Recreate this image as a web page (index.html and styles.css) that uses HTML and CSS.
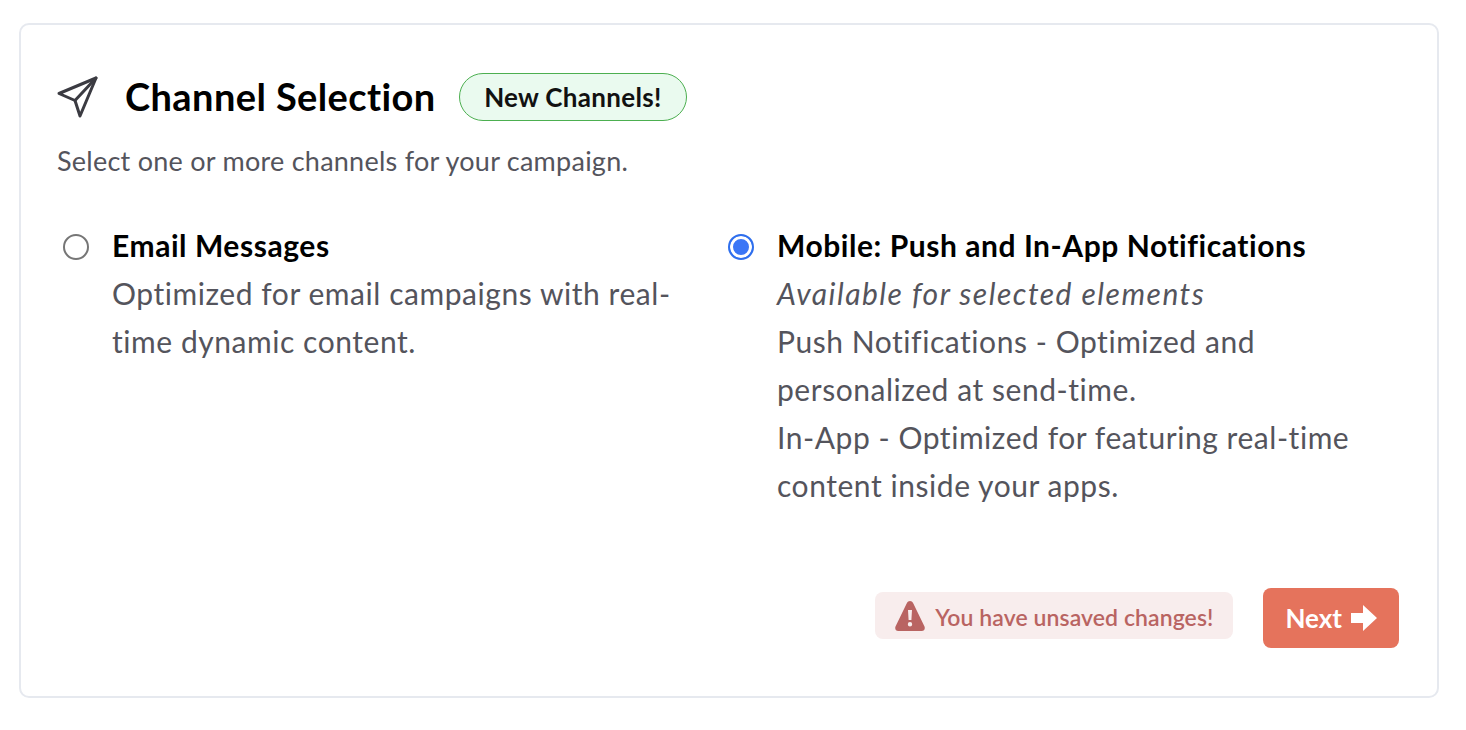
FILE: index.html
```html
<!DOCTYPE html><html lang="en">
<head>
    <meta charset="UTF-8">
    <title>Channel Selection</title>
    <link rel="stylesheet" href="styles.css">
</head>
<body>
<div class="card">
    <div class="header">
        <svg class="plane" width="44" height="44" viewBox="0 0 44 44" fill="none" stroke="#3b3b42" stroke-width="3" stroke-linejoin="round" stroke-linecap="round">
            <path d="M39 3 2 18.500 18 25.500 23 41Z"/>
            <path d="M39 3 18 25.500"/>
        </svg>
        <h2>Channel Selection</h2>
        <span class="badge">New Channels!</span>
    </div>
    <p class="intro">Select one or more channels for your campaign.</p>

    <div class="channels">
        <div class="channel">
            <span class="radio"></span>
            <div class="channel-text">
                <h3>Email Messages</h3>
                <p>Optimized for email campaigns with real-time dynamic content.</p>
            </div>
        </div>
        <div class="channel">
            <span class="radio checked"></span>
            <div class="channel-text">
                <h3>Mobile: Push and In-App Notifications</h3>
                <p><em>Available for selected elements</em></p>
                <p>Push Notifications - Optimized and personalized at send-time.</p>
                <p>In-App - Optimized for featuring real-time content inside your apps.</p>
            </div>
        </div>
    </div>

    <div class="footer">
        <div class="warning">
            <svg width="30" height="30" viewBox="0 0 30 30"><path fill="#b96462" fill-rule="evenodd" d="M11.800 2.200c1.400-2.900 5-2.900 6.400 0l11.300 23.400c.9 2-.4 4.400-2.800 4.400H3.300C.9 30-.4 27.600.5 25.600ZM13 9l.6 10h2.800L17 9ZM15 21a2.200 2.200 0 1 0 0 4.400 2.200 2.200 0 0 0 0-4.400Z"/></svg>
            <span>You have unsaved changes!</span>
        </div>
        <button class="next-btn">Next
            <svg width="26" height="26" viewBox="0 0 26 26"><path fill="#fff" d="M0 8h12V0l14 13-14 13v-8H0Z"/></svg>
        </button>
    </div>
</div>
</body>
</html>
```
FILE: styles.css
```css
* {
    margin: 0;
    padding: 0;
    box-sizing: border-box;
    font-family: Lato, "Open Sans", sans-serif;
}
body {
    padding: 23px 27px 0 19px;
    background: #fff;
}
.card {
    height: 675px;
    border: 2px solid #e6e9ef;
    border-radius: 10px;
    padding: 48px 38px 0 36px;
}
.header {
    display: flex;
    align-items: center;
    height: 48px;
}
.plane { flex: none; margin-right: -2px; }
h2 {
    margin-left: 26px;
    margin-top: -2px;
    font-size: 38px;
    font-weight: 700;
    color: #000;
    letter-spacing: 0.4px;
}
.badge {
    margin-left: 23px;
    height: 48px;
    line-height: 46px;
    padding: 0 24.5px;
    border: 1px solid #4caf50;
    border-radius: 24px;
    background: #eafaef;
    color: #111;
    font-size: 26px;
    font-weight: 700;
    letter-spacing: 0.3px;
}
.intro {
    margin-top: 20px;
    line-height: 40px;
    font-size: 27px;
    letter-spacing: 0.25px;
    color: #54545c;
}
.channels {
    display: grid;
    grid-template-columns: 665px 1fr;
    margin-top: 40px;
    height: 367px;
}
.channel {
    display: flex;
    padding-left: 6px;
}
.radio {
    flex: none;
    width: 26px;
    height: 26px;
    margin-top: 13px;
    border: 2px solid #767676;
    border-radius: 50%;
}
.radio.checked {
    border-color: #2f6fed;
    background: #3b76f6;
    box-shadow: inset 0 0 0 3px #fff;
}
.channel-text {
    margin-left: 23px;
    width: 580px;
    font-size: 30px;
    letter-spacing: 0.55px;
    line-height: 48px;
    color: #54545c;
}
.channel-text em {
    letter-spacing: 1.5px;
}
h3 {
    font-size: 30px;
    font-weight: 700;
    letter-spacing: 0.55px;
    color: #000;
}
.footer {
    display: flex;
    justify-content: flex-end;
    align-items: center;
    gap: 30px;
}
.warning {
    display: flex;
    align-items: center;
    gap: 10px;
    height: 47px;
    margin-bottom: 5px;
    padding: 0 20px;
    border-radius: 8px;
    background: #f8eded;
    color: #b96462;
    font-size: 23px;
    font-weight: 600;
    letter-spacing: 0.08px;
}
.warning span { padding-top: 2px; }
.next-btn {
    display: flex;
    align-items: center;
    gap: 9px;
    height: 60px;
    padding: 0 22px;
    border: none;
    border-radius: 8px;
    background: #e5735c;
    color: #fff;
    font-size: 26px;
    font-weight: 700;
}
```
